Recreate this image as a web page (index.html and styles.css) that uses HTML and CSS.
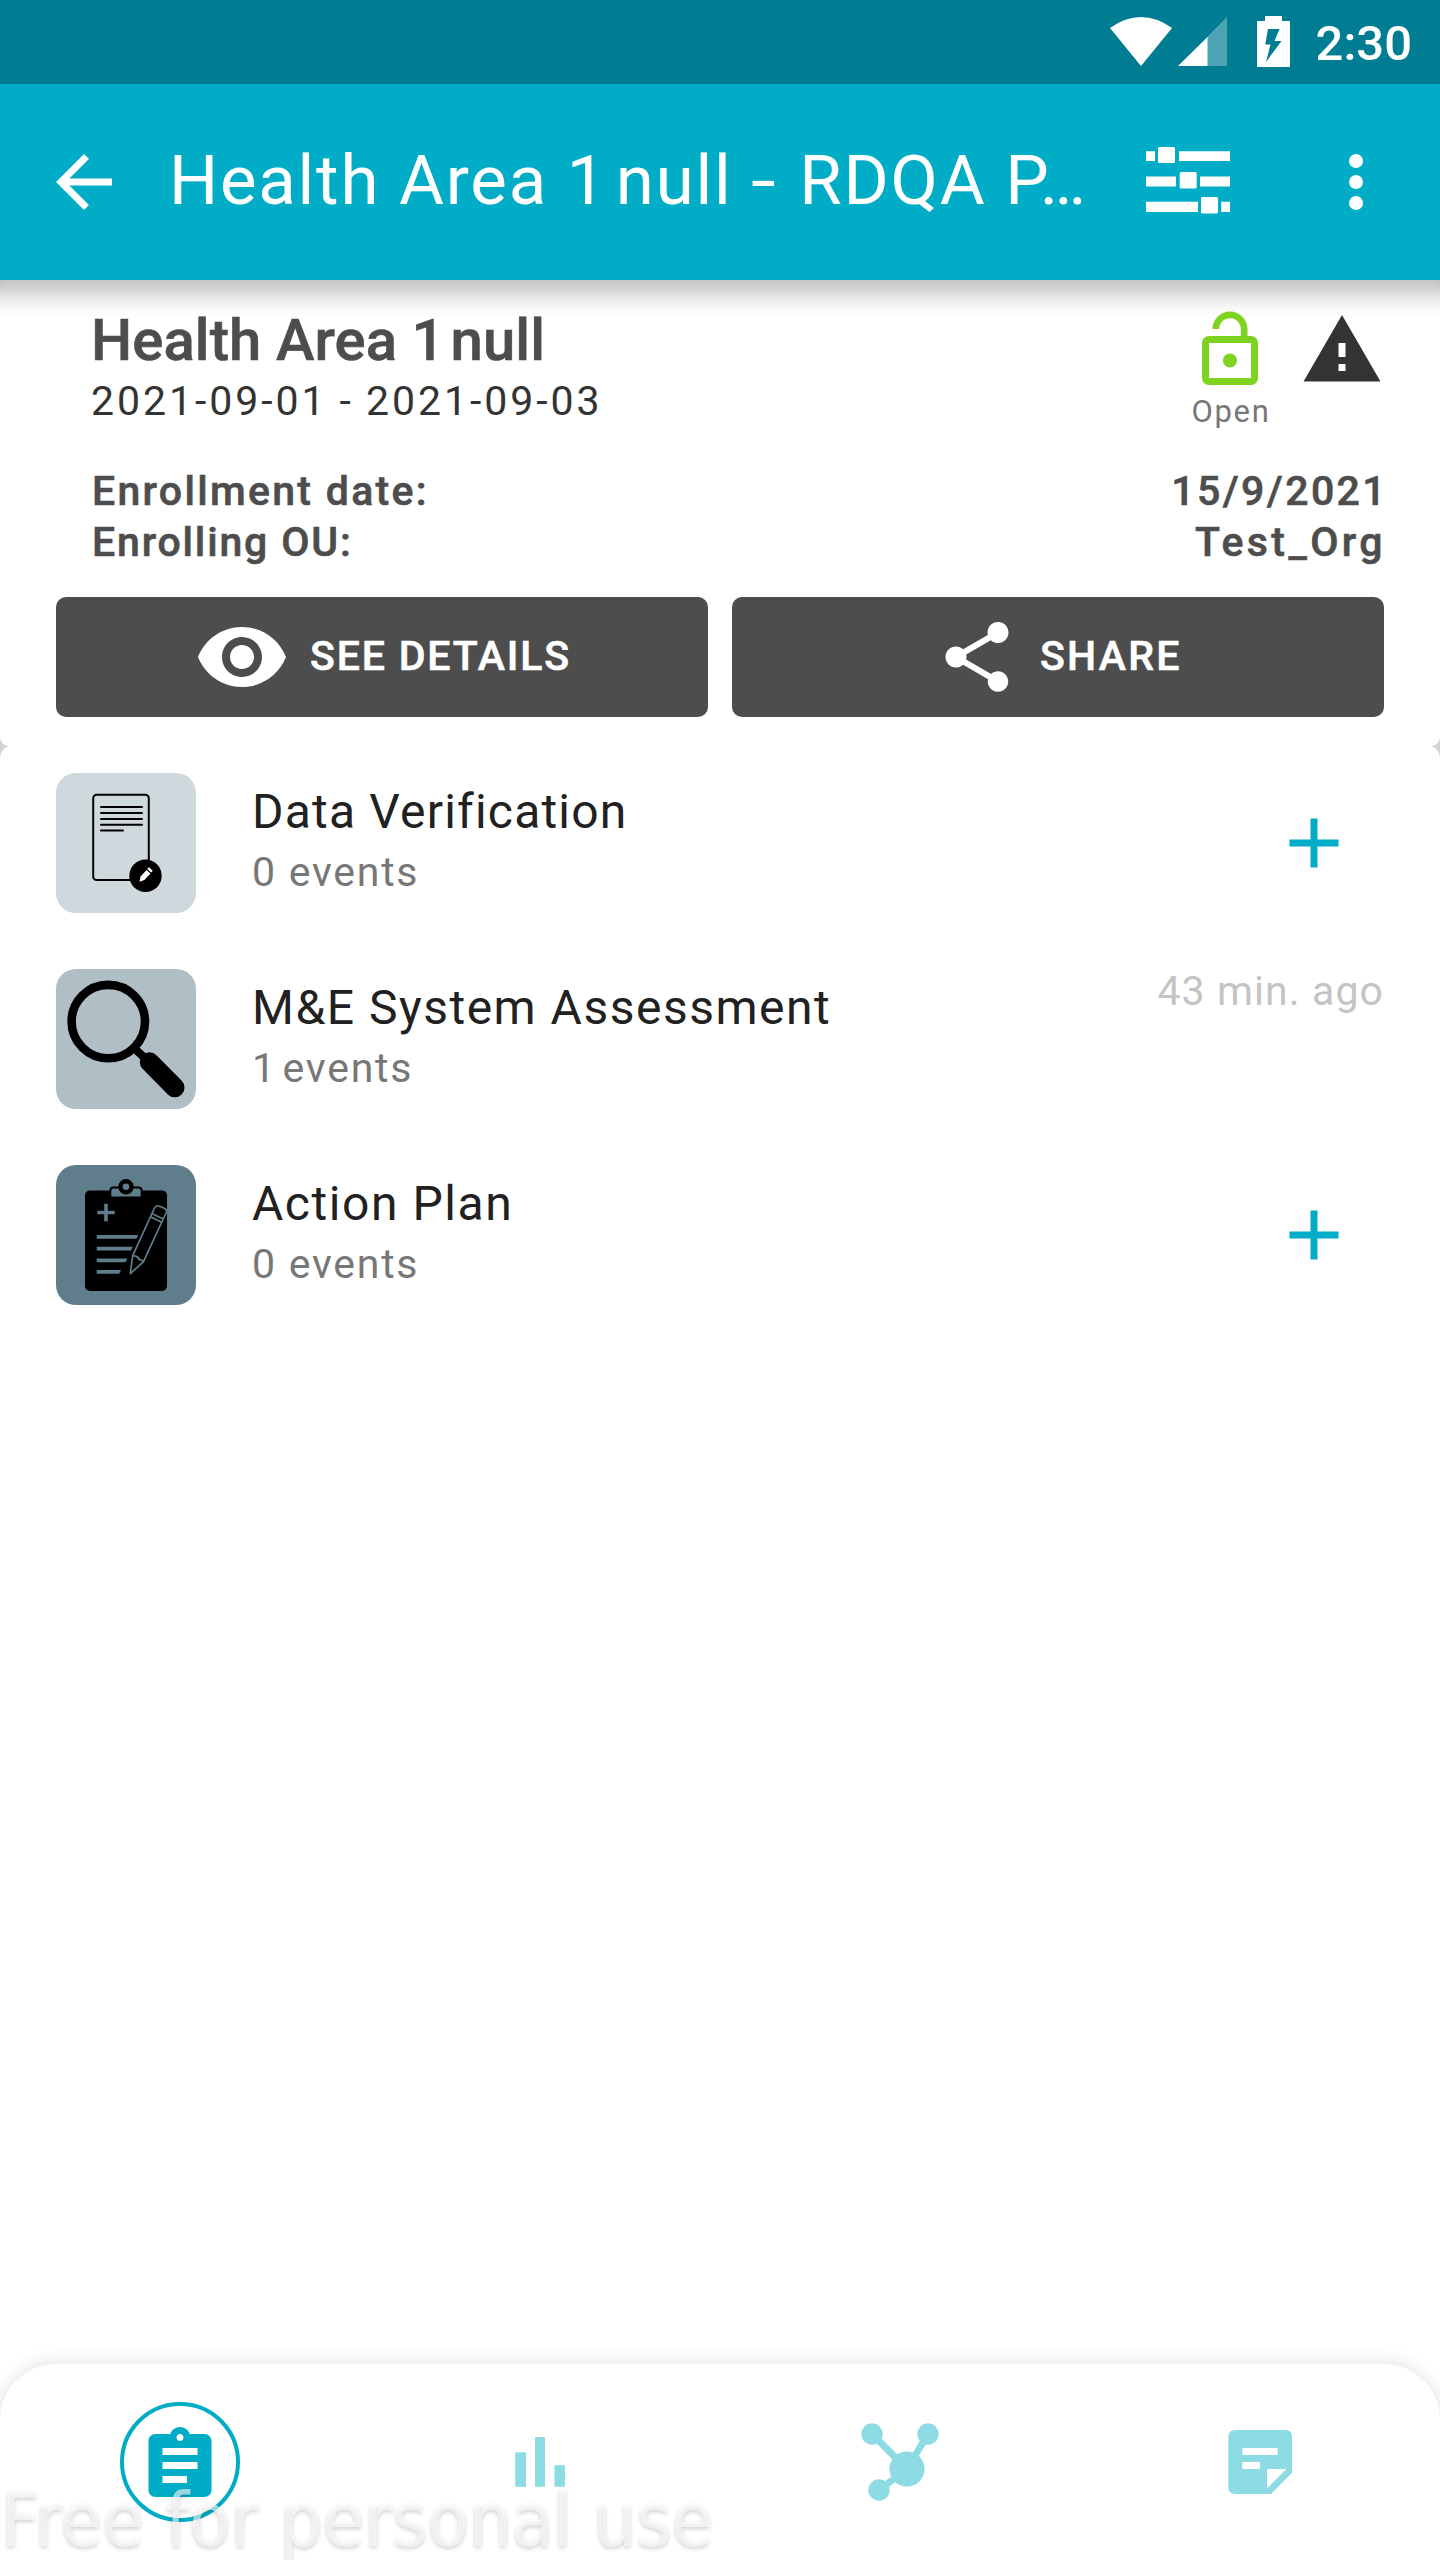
FILE: index.html
```html
<!DOCTYPE html>
<html lang="en">
<head>
<meta charset="utf-8">
<title>Health Area 1 null - RDQA</title>
<link rel="stylesheet" href="styles.css">
</head>
<body>
<div class="screen">
  <div class="status-bar">
    <svg class="status-icons" width="190" height="84" viewBox="1105 0 190 84">
      <path fill="#fff" d="M1110 28Q1141 6 1172 28L1141 66Z"/>
      <path fill="#fff" fill-opacity=".3" d="M1207 37L1227 17V66H1207Z"/>
      <path fill="#fff" d="M1178 66L1207.500 37V66Z"/>
      <path fill="#fff" fill-rule="evenodd" d="M1265 16H1282V21H1290V67H1257V21H1265ZM1268 29L1265.300 44.500H1270.500L1266 62L1281.500 41H1274.500L1279.500 29Z"/>
    </svg>
    <span class="clock">2:30</span>
  </div>

  <header class="app-bar">
    <svg class="back" width="84" height="84" viewBox="0 0 24 24"><path fill="#fff" d="M20 11H7.830l5.590-5.590L12 4l-8 8 8 8 1.410-1.410L7.830 13H20v-2z"/></svg>
    <h1 class="app-title">Health Area <span class="one">1 </span>null <span class="dash">-</span> RDQA P…</h1>
    <svg class="filter" width="84" height="84" viewBox="0 0 84 84" fill="#fff">
      <path d="M0 11.300h9V21H0zM33 11.300h51V21H33zM0 36.500h30v10H0zM54 36.500h30v10H54zM0 61.700h52V72H0zM75.300 61.700H84V72h-8.700z"/>
      <rect x="12" y="7" width="17" height="16" rx="1.500"/>
      <rect x="33.700" y="32" width="17" height="16.500" rx="1.500"/>
      <rect x="55" y="57" width="17" height="16.500" rx="1.500"/>
    </svg>
    <svg class="more" width="84" height="84" viewBox="0 0 24 24" fill="#fff"><circle cx="12" cy="6" r="2"/><circle cx="12" cy="12" r="2"/><circle cx="12" cy="18" r="2"/></svg>
  </header>

  <main class="content">
    <section class="card">
      <div class="summary">
        <div class="names">
          <h2 class="name">Health Area <span class="one">1 </span>null</h2>
          <p class="period">2021-09-01 - 2021-09-03</p>
        </div>
        <div class="lock">
          <svg width="84" height="84" viewBox="0 0 24 24"><path fill="#7ed321" d="M12 17c1.100 0 2-.9 2-2s-.9-2-2-2-2 .9-2 2 .9 2 2 2zm6-9h-1V6c0-2.760-2.240-5-5-5S7 3.240 7 6h1.900c0-1.710 1.390-3.100 3.100-3.100 1.710 0 3.100 1.390 3.100 3.100v2H6c-1.100 0-2 .9-2 2v10c0 1.100.9 2 2 2h12c1.100 0 2-.9 2-2V10c0-1.100-.9-2-2-2zm0 12H6V10h12v10z"/></svg>
          <span class="lock-label">Open</span>
        </div>
        <svg class="warning" width="84" height="84" viewBox="0 0 24 24"><path fill="#333" d="M1 21h22L12 2 1 21zm12-3h-2v-2h2v2zm0-4h-2v-4h2v4z"/></svg>
      </div>
      <dl class="facts">
        <div class="fact"><dt class="label-date">Enrollment date:</dt><dd class="value-date">15/9/2021</dd></div>
        <div class="fact"><dt class="label-unit">Enrolling OU:</dt><dd class="value-unit">Test_Org</dd></div>
      </dl>
      <div class="actions">
        <button class="action details">
          <svg width="96" height="96" viewBox="0 0 24 24"><path fill="#fff" d="M12 4.500C7 4.500 2.730 7.610 1 12c1.730 4.390 6 7.500 11 7.500s9.270-3.110 11-7.500c-1.730-4.390-6-7.500-11-7.500zM12 17c-2.760 0-5-2.240-5-5s2.240-5 5-5 5 2.240 5 5-2.240 5-5 5zm0-8c-1.660 0-3 1.340-3 3s1.340 3 3 3 3-1.340 3-3-1.340-3-3-3z"/></svg>
          <span>SEE DETAILS</span>
        </button>
        <button class="action share">
          <svg width="84" height="84" viewBox="0 0 24 24"><path fill="#fff" d="M18 16.080c-.76 0-1.440.3-1.960.77L8.910 12.700c.05-.23.09-.46.09-.7s-.04-.47-.09-.7l7.050-4.110c.54.5 1.250.81 2.040.81 1.660 0 3-1.340 3-3s-1.340-3-3-3-3 1.340-3 3c0 .24.04.47.09.7L8.040 9.810C7.500 9.310 6.790 9 6 9c-1.660 0-3 1.340-3 3s1.340 3 3 3c.79 0 1.500-.31 2.040-.81l7.120 4.160c-.05.21-.08.43-.08.65 0 1.610 1.310 2.920 2.920 2.920s2.920-1.310 2.920-2.920-1.310-2.920-2.920-2.920z"/></svg>
          <span>SHARE</span>
        </button>
      </div>
    </section>

    <section class="stages">
      <article class="stage">
        <svg class="tile tile-light" width="140" height="140" viewBox="0 0 140 140">
          <rect x="37.200" y="21.700" width="55.600" height="85.300" rx="3.500" fill="none" stroke="#000" stroke-width="2"/>
          <path d="M45 34H86M45 40H86M45 46H86M45 51.700H86M45 57.600H67" stroke="#000" stroke-width="2" stroke-linecap="round"/>
          <circle cx="89.500" cy="102.700" r="16.200"/>
          <g transform="translate(89.500 102) rotate(42)" fill="#fff"><path d="M-2.600-4.500H2.600V4.500L0 9L-2.600 4.500Z"/><path d="M-2.600-8H2.600V-5.600H-2.600Z"/></g>
        </svg>
        <div class="stage-text"><h3 class="stage-name verification">Data Verification</h3><p class="events">0 events</p></div>
        <svg class="add" width="84" height="84" viewBox="0 0 24 24"><path fill="#00acc6" d="M19 13h-6v6h-2v-6H5v-2h6V5h2v6h6v2z"/></svg>
      </article>
      <article class="stage">
        <svg class="tile tile-mid" width="140" height="140" viewBox="0 0 140 140" fill="none" stroke="#000">
          <circle cx="52.300" cy="52.600" r="36.700" stroke-width="8.600"/>
          <path d="M78 79L92 92" stroke-width="8"/>
          <path d="M93.500 93L118.800 118.600" stroke-width="19.500" stroke-linecap="round"/>
        </svg>
        <div class="stage-text"><h3 class="stage-name assessment">M&amp;E System Assessment</h3><p class="events"><span class="one">1 </span>events</p></div>
        <time class="ago">43 min. ago</time>
      </article>
      <article class="stage">
        <svg class="tile tile-dark" width="140" height="140" viewBox="0 0 140 140">
          <rect x="29" y="25.400" width="82" height="100.600" rx="5"/>
          <path d="M54.300 32.500V26Q54.300 22.600 57.500 22.600H82.500Q85.700 22.600 85.700 26V32.500Z" fill="#607d8b" stroke="#000" stroke-width="2"/>
          <circle cx="70" cy="21.800" r="5.500" fill="#607d8b" stroke="#000" stroke-width="4.400"/>
          <path d="M50 38.800V56.200M41.300 47.500H58.700" stroke="#607d8b" stroke-width="3.600"/>
          <path d="M40.700 69.900H82.300L80.500 73.700H40.700ZM40.700 81.700H76.700L75 85.500H40.700ZM40.700 93.400H71.300L69.500 97.300H40.700ZM40.700 105H65L63.200 108.800H40.700Z" fill="#607d8b"/>
          <path d="M76.700 90.700L98.500 43Q99.800 40 103 41L108.300 43.300Q111.500 45 110 48L87.300 96.800L74.300 108.600ZM76.700 90.700Q82 91 83 94.500Q85 94 87.300 96.800M95.300 48.200L106.700 53.800M93.800 51.500L105.200 57" fill="none" stroke="#607d8b" stroke-width="1.700" stroke-linejoin="round"/>
        </svg>
        <div class="stage-text"><h3 class="stage-name plan">Action Plan</h3><p class="events">0 events</p></div>
        <svg class="add" width="84" height="84" viewBox="0 0 24 24"><path fill="#00acc6" d="M19 13h-6v6h-2v-6H5v-2h6V5h2v6h6v2z"/></svg>
      </article>
    </section>
  </main>

  <nav class="bottom-nav">
    <svg width="120" height="120" viewBox="0 0 120 120">
      <circle cx="60" cy="60" r="58" fill="none" stroke="#00acc6" stroke-width="4"/>
      <path transform="translate(18 21.500) scale(3.500)" fill="#00acc6" fill-rule="evenodd" d="M19 3h-4.180C14.400 1.840 13.300 1 12 1c-1.300 0-2.400.84-2.820 2H5c-1.100 0-2 .9-2 2v14c0 1.100.9 2 2 2h14c1.100 0 2-.9 2-2V5c0-1.100-.9-2-2-2zm-7 0c.55 0 1 .45 1 1s-.45 1-1 1-1-.45-1-1 .45-1 1-1zm2 14H7v-2h7v2zm3-4H7v-2h10v2zm0-4H7V7h10v2z"/>
    </svg>
    <svg width="120" height="120" viewBox="0 0 120 120"><path fill="#8ddbe3" d="M35.300 50.200H46V84.700H35.300ZM55 35H65V84.700H55ZM74.500 63.200H85V84.700H74.500Z"/></svg>
    <svg width="120" height="120" viewBox="0 0 120 120" fill="#8ddbe3">
      <path d="M32 32L67 67L88 32M67 67L39 88" fill="none" stroke="#8ddbe3" stroke-width="7"/>
      <circle cx="32" cy="32" r="10.700"/><circle cx="88" cy="32" r="10.700"/><circle cx="67" cy="67" r="17.600"/><circle cx="39" cy="88" r="10.700"/>
    </svg>
    <svg width="120" height="120" viewBox="0 0 120 120"><path fill="#8ddbe3" fill-rule="evenodd" d="M35.300 28H85.200Q92 28 92 35V70.700L71 92H35.300Q28.300 92 28.300 85V35Q28.300 28 35.300 28ZM42.300 46V53H77.700V46ZM42.300 60V67H60V60ZM67 67V86.500L86.500 67Z"/></svg>
    <span class="watermark">Free for personal use</span>
  </nav>
</div>
</body>
</html>
```
FILE: styles.css
```css
* { box-sizing: border-box; }

body {
  margin: 0;
  background: #fff;
  font-family: Roboto, "Liberation Sans", sans-serif;
}

h1, h2, h3, p, dl, dd { margin: 0; font-weight: 400; }

svg { display: block; flex: none; }

.screen {
  width: 1440px;
  height: 2560px;
  display: flex;
  flex-direction: column;
  overflow: hidden;
}

.status-bar {
  height: 84px;
  flex: none;
  background: #007d93;
  display: flex;
  justify-content: flex-end;
  align-items: center;
  padding-right: 28px;
}

.clock {
  margin-left: 21px;
  padding-top: 4px;
  font-size: 49px;
  font-weight: 500;
  line-height: 60px;
  color: #fff;
}

.app-bar {
  height: 196px;
  flex: none;
  background: #00acc6;
  display: flex;
  align-items: center;
  padding: 0 42px;
}

.app-title {
  flex: 1;
  margin-left: 43px;
  padding-bottom: 3px;
  font-size: 69px;
  letter-spacing: 1.75px;
  white-space: nowrap;
  color: #fff;
}

/* The numeral one sits tight against the word after it. */
.one { word-spacing: -.15em; }
.dash {
  display: inline-block;
  transform: scaleX(1.3);
  margin: 0 5px 0 3px;
}

.more { margin-left: 84px; }

.content {
  flex: 1;
  background: linear-gradient(#c4c4c4, #d6d6d6 500px, #fff 560px);
  display: flex;
  flex-direction: column;
}

.card {
  height: 466px;
  padding: 27px 56px 0;
  border-radius: 9px;
  background: linear-gradient(#c6c6c6, #d2d2d2 9px, #ececec 20px, #fafafa 30px, #fff 40px);
}

.summary {
  height: 158px;
  display: flex;
  align-items: flex-start;
}

.names { flex: 1; padding-left: 36px; }

.name {
  margin-left: -1px;
  font-size: 58px;
  font-weight: 500;
  line-height: 66px;
  letter-spacing: .1px;
  color: #4d4d4d;
  -webkit-text-stroke: .6px #4d4d4d;
}

.period {
  margin-top: 3px;
  margin-left: -1px;
  font-size: 41px;
  line-height: 50px;
  letter-spacing: 2.95px;
  word-spacing: -1px;
  color: #333;
}

.lock {
  width: 84px;
  margin: 1px 28px 0 0;
  display: flex;
  flex-direction: column;
  align-items: center;
}

.lock-label {
  margin-top: 2px;
  padding-left: 2px;
  font-size: 31px;
  line-height: 36px;
  letter-spacing: 1.7px;
  color: #777;
}

.warning { margin-top: 1px; }

.facts {
  padding-left: 36px;
  padding-top: 1px;
  font-size: 41px;
  font-weight: 500;
  line-height: 51px;
  color: #4d4d4d;
  -webkit-text-stroke: .6px #4d4d4d;
}

.fact { display: flex; justify-content: space-between; }
.fact dt, .fact dd { font-weight: 500; }
.label-date { letter-spacing: 2.3px; }
.label-unit { letter-spacing: 1.84px; }
.value-date { letter-spacing: 2.4px; margin-right: -4px; }
.value-unit { letter-spacing: 3.4px; margin-right: -2px; }

.actions {
  margin-top: 29px;
  display: grid;
  grid-template-columns: 1fr 1fr;
  gap: 24px;
}

.action {
  height: 120px;
  border: 0;
  border-radius: 10px;
  background: #4d4d4d;
  color: #fff;
  display: flex;
  align-items: center;
  font: 500 41px/50px Roboto, "Liberation Sans", sans-serif;
  -webkit-text-stroke: .6px #fff;
}

.action span { padding-bottom: 2px; }
.details { padding: 0 0 0 138px; letter-spacing: 1.85px; }
.details span { margin-left: 20px; }
.share { padding: 0 0 0 203px; letter-spacing: 2.25px; }
.share span { margin-left: 21px; }

.stages {
  flex: 1;
  margin-top: -1px;
  padding: 28px 56px 0;
  border-radius: 14px 14px 0 0;
  background: #fff;
}

.stage {
  height: 140px;
  margin-bottom: 56px;
  display: flex;
  align-items: flex-start;
}

.tile { border-radius: 20px; }
.tile-light { background: #cfd8dc; }
.tile-mid { background: #b0bec5; }
.tile-dark { background: #607d8b; }

.stage-text { flex: 1; padding: 10px 0 0 56px; }

.stage-name {
  font-size: 48px;
  line-height: 58px;
  color: #212121;
}

.verification { letter-spacing: 1.2px; }
.assessment { letter-spacing: 1.5px; }
.plan { letter-spacing: 1.55px; }

.events {
  margin-top: 6px;
  font-size: 41px;
  line-height: 50px;
  letter-spacing: 1.75px;
  color: #777;
}

.add { margin: 28px 28px 0 0; }

.ago {
  font-size: 41px;
  line-height: 44px;
  letter-spacing: 1.1px;
  color: #c4c4c4;
}

.bottom-nav {
  position: relative;
  height: 196px;
  flex: none;
  display: grid;
  grid-template-columns: repeat(4, 1fr);
  align-items: center;
  justify-items: center;
  border-radius: 56px 56px 0 0;
  background: #fff;
  box-shadow: 0 0 20px rgba(0, 0, 0, .13);
}

.watermark {
  position: absolute;
  left: 1px;
  bottom: 8px;
  font: 75.2px/64px "DejaVu Sans Condensed", "DejaVu Sans", sans-serif;
  font-stretch: condensed;
  white-space: nowrap;
  color: rgba(255, 255, 255, .6);
  text-shadow: 0 2px 4px rgba(0, 0, 0, .18);
}
```
